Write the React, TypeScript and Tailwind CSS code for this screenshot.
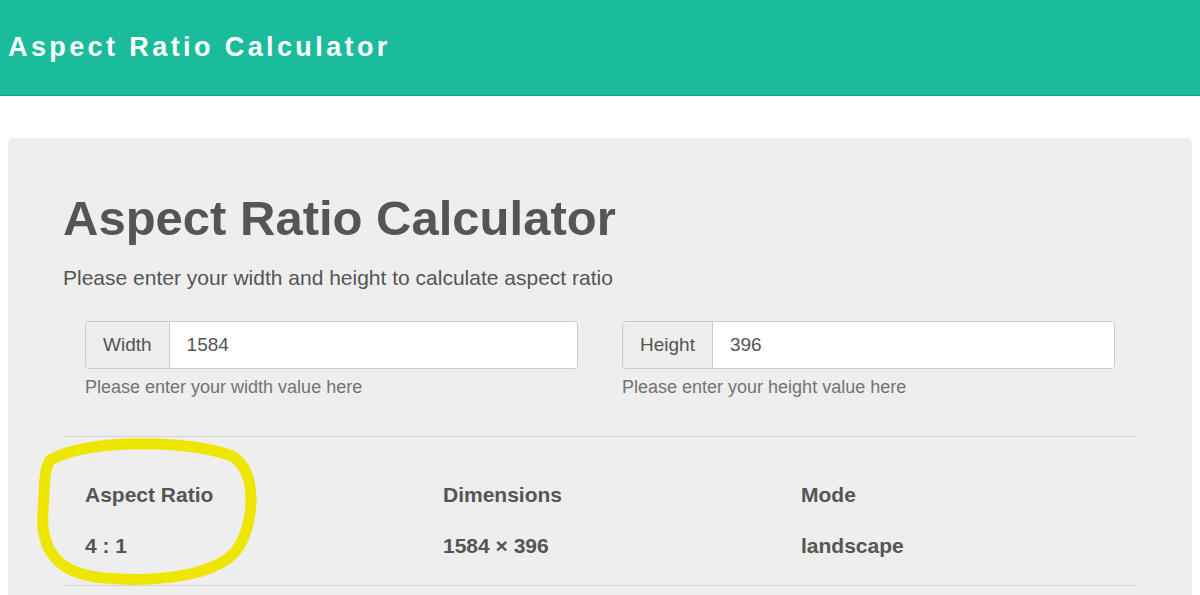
export default function App() {
  return (
    <div
      className="relative min-h-[595px] bg-white text-[#555]"
      style={{ fontFamily: '"Liberation Sans", Arial, sans-serif' }}
    >
      <header className="h-[96px] bg-[#1abc9c] border-b border-[#16a085] flex items-center px-2">
        <span className="text-[27px] font-bold tracking-[3.4px] text-white">
          Aspect Ratio Calculator
        </span>
      </header>

      <div className="px-2 pt-[42px]">
        <div className="rounded-md bg-[#eee] px-[55px] pt-[49px] pb-8">
          <h1 className="text-[49px] font-bold leading-[62px] text-[#555]">
            Aspect Ratio Calculator
          </h1>
          <p className="mt-[13px] text-[21px] leading-[31px] text-[#555]">
            Please enter your width and height to calculate aspect ratio
          </p>

          <div className="mt-[28px] grid grid-cols-2">
            <Field label="Width" value="1584" help="Please enter your width value here" />
            <Field label="Height" value="396" help="Please enter your height value here" />
          </div>

          <div className="mt-[35px] border-t border-[#d5d5d5]" />

          {/* results */}
          <div className="grid grid-cols-3 pt-[42px] pb-[24px]">
            <Result label="Aspect Ratio" value="4 : 1" />
            <Result label="Dimensions" value="1584 × 396" />
            <Result label="Mode" value="landscape" />
          </div>

          <div className="border-t border-[#d5d5d5]" />
        </div>
      </div>

      {/* hand drawn highlight */}
      <svg
        className="absolute left-0 top-0 pointer-events-none"
        width="300"
        height="595"
        viewBox="0 0 300 595"
      >
        <path
          d="M 50 460 C 90 438, 190 440, 232 456 C 258 472, 254 520, 240 545 C 222 578, 150 582, 105 578 C 55 574, 40 548, 43 510 C 45 490, 43 472, 50 460 Z"
          fill="none"
          stroke="#eee600"
          strokeWidth="11"
          strokeLinejoin="round"
        />
      </svg>
    </div>
  );
}

function Field({ label, value, help }: { label: string; value: string; help: string }) {
  return (
    <div className="px-[22px]">
      <div className="flex h-[48px] rounded border border-[#ccc] overflow-hidden text-[19px]">
        <span className="flex items-center px-[17px] bg-[#eee] border-r border-[#ccc] text-[#555]">
          {label}
        </span>
        <span className="flex flex-1 items-center bg-white px-[17px] text-[#555]">
          {value}
        </span>
      </div>
      <p className="mt-[5px] text-[18px] leading-[27px] text-[#737373]">{help}</p>
    </div>
  );
}

function Result({ label, value }: { label: string; value: string }) {
  return (
    <div className="px-[22px] font-bold text-[21px] leading-[31px] text-[#555]">
      <div>{label}</div>
      <div className="mt-[20px]">{value}</div>
    </div>
  );
}
